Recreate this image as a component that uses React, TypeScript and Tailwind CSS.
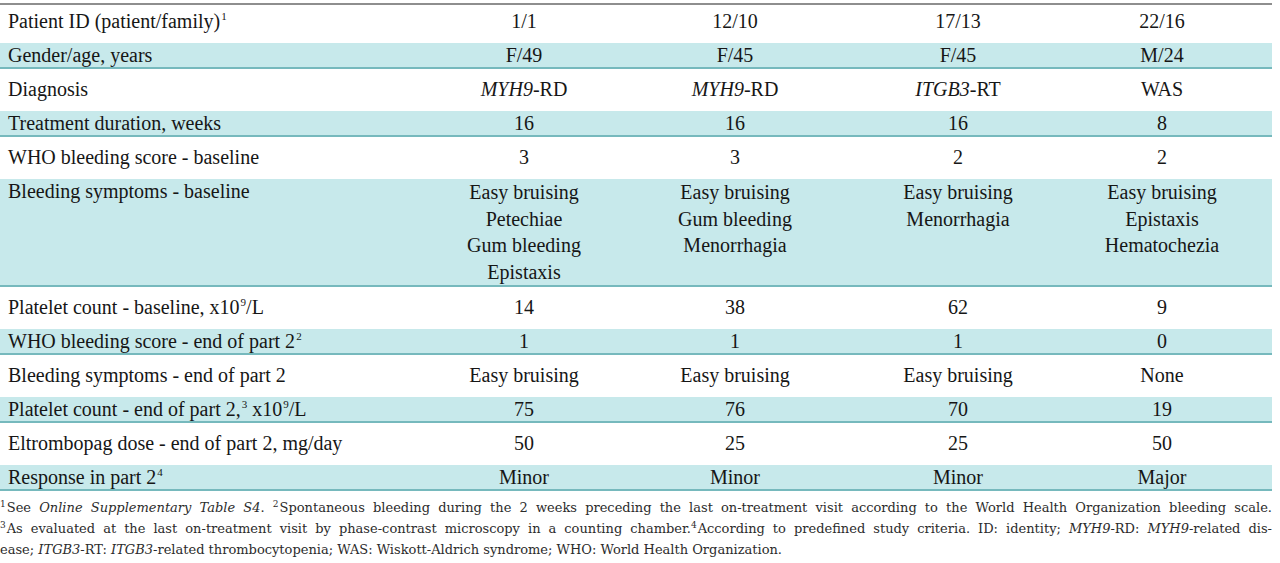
import React from "react";

type Row = {
  label: React.ReactNode;
  cells: React.ReactNode[];
};

const Sup = ({ children, small }: { children: React.ReactNode; small?: boolean }) => (
  <sup className={small ? "text-[9px] -top-[5px] mr-[1px]" : "text-[11px] -top-[8px] ml-[1px]"}>{children}</sup>
);

const rows: Row[] = [
  {
    label: (
      <>
        Patient ID (patient/family)<Sup>1</Sup>
      </>
    ),
    cells: ["1/1", "12/10", "17/13", "22/16"],
  },
  { label: "Gender/age, years", cells: ["F/49", "F/45", "F/45", "M/24"] },
  {
    label: "Diagnosis",
    cells: [
      <><i>MYH9</i>-RD</>,
      <><i>MYH9</i>-RD</>,
      <><i>ITGB3</i>-RT</>,
      "WAS",
    ],
  },
  { label: "Treatment duration, weeks", cells: ["16", "16", "16", "8"] },
  { label: "WHO bleeding score - baseline", cells: ["3", "3", "2", "2"] },
  {
    label: "Bleeding symptoms - baseline",
    cells: [
      ["Easy bruising", "Petechiae", "Gum bleeding", "Epistaxis"],
      ["Easy bruising", "Gum bleeding", "Menorrhagia"],
      ["Easy bruising", "Menorrhagia"],
      ["Easy bruising", "Epistaxis", "Hematochezia"],
    ].map((lines, i) => (
      <div key={i} className="leading-[26.5px]">
        {lines.map((l) => (
          <div key={l}>{l}</div>
        ))}
      </div>
    )),
  },
  {
    label: (
      <>
        Platelet count - baseline, x10<Sup>9</Sup>/L
      </>
    ),
    cells: ["14", "38", "62", "9"],
  },
  {
    label: (
      <>
        WHO bleeding score - end of part 2<Sup>2</Sup>
      </>
    ),
    cells: ["1", "1", "1", "0"],
  },
  {
    label: "Bleeding symptoms - end of part 2",
    cells: ["Easy bruising", "Easy bruising", "Easy bruising", "None"],
  },
  {
    label: (
      <>
        Platelet count - end of part 2,<Sup>3</Sup> x10<Sup>9</Sup>/L
      </>
    ),
    cells: ["75", "76", "70", "19"],
  },
  { label: "Eltrombopag dose - end of part 2, mg/day", cells: ["50", "25", "25", "50"] },
  {
    label: (
      <>
        Response in part 2<Sup>4</Sup>
      </>
    ),
    cells: ["Minor", "Minor", "Minor", "Major"],
  },
];

function TableRow({ row, shaded }: { row: Row; shaded: boolean }) {
  return (
    <div className="py-[4px]">
      <div
        className={
          shaded
            ? "grid grid-cols-[420px_208px_214px_232px_176px] bg-[#c7e9eb] border-b-2 border-[#76b9bd]"
            : "grid grid-cols-[420px_208px_214px_232px_176px] border-b-2 border-transparent"
        }
      >
        <div className="pl-[8px] leading-[24px]">{row.label}</div>
        {row.cells.map((c, i) => (
          <div key={i} className="text-center leading-[24px]">
            {c}
          </div>
        ))}
      </div>
    </div>
  );
}

export default function App() {
  return (
    <div className="w-[1280px] h-[563px] bg-white overflow-hidden pt-[3px]">
      <div className="w-[1272px] border-t-2 border-[#8e8e8e] text-[20px] text-[#161616] font-['Liberation_Serif',serif]">
        {rows.map((r, i) => (
          <TableRow key={i} row={r} shaded={i % 2 === 1} />
        ))}
      </div>

      {/* footnotes */}
      <div className="w-[1272px] pt-[2px] text-[13px] leading-[21px] text-[#2b2b2b] font-['DejaVu_Serif',serif]">
        <div className="whitespace-nowrap text-justify [text-align-last:justify]">
          <Sup small>1</Sup>See <i>Online Supplementary Table S4</i>. <Sup small>2</Sup>Spontaneous bleeding during the 2 weeks
          preceding the last on-treatment visit according to the World Health Organization bleeding scale.
        </div>
        <div className="whitespace-nowrap text-justify [text-align-last:justify]">
          <Sup small>3</Sup>As evaluated at the last on-treatment visit by phase-contrast microscopy in a counting
          chamber.<Sup small>4</Sup>According to predefined study criteria. ID: identity; <i>MYH9</i>-RD: <i>MYH9</i>-related dis-
        </div>
        <div className="whitespace-nowrap">
          ease; <i>ITGB3</i>-RT: <i>ITGB3</i>-related thrombocytopenia; WAS: Wiskott-Aldrich syndrome; WHO: World
          Health Organization.
        </div>
      </div>
    </div>
  );
}
